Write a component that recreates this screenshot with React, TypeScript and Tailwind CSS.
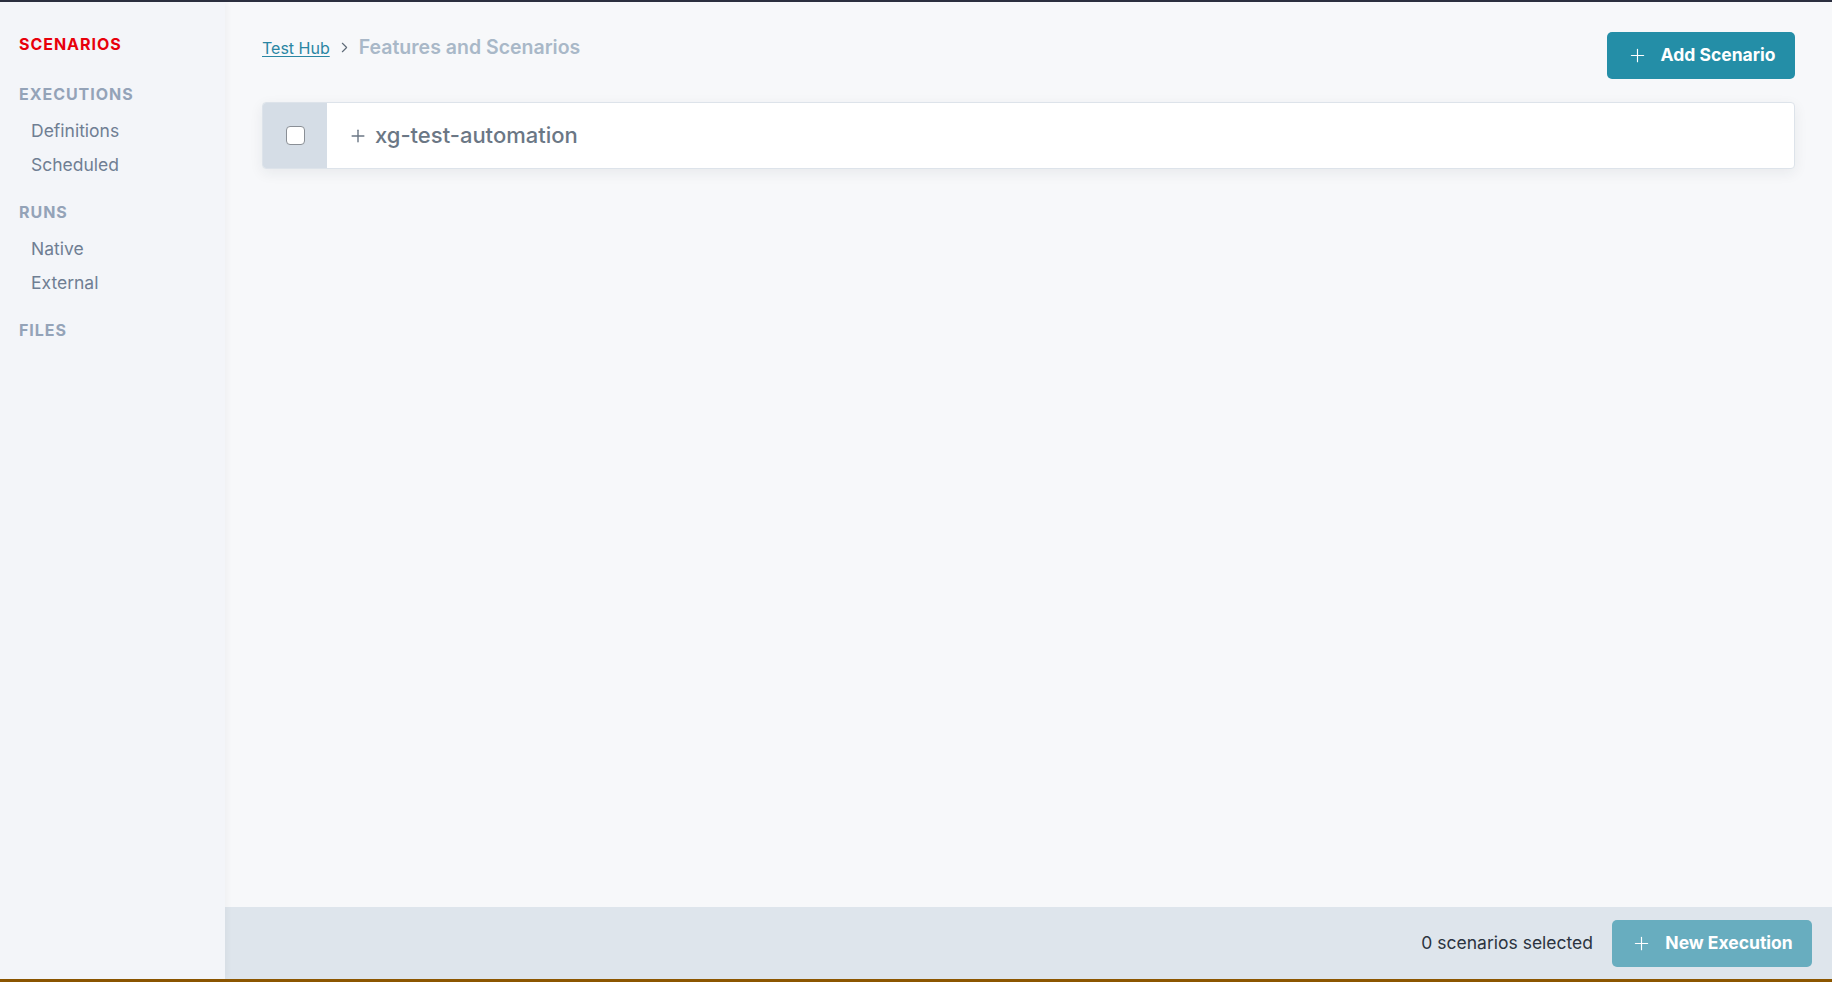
import { Plus, ChevronRight } from "lucide-react";

const FONT = { fontFamily: "Inter, 'Noto Sans', sans-serif" };

function SectionTitle({ label, active }: { label: string; active?: boolean }) {
  return (
    <div
      className={`text-[16px] font-bold uppercase tracking-[0.06em] leading-none ${
        active ? "text-[#e8000b]" : "text-[#94a3b8]"
      }`}
    >
      {label}
    </div>
  );
}

function NavItem({ label }: { label: string }) {
  return (
    <div className="pl-[12px] text-[17.5px] leading-none text-[#6f7e93]">{label}</div>
  );
}

export default function App() {
  return (
    <div
      className="flex h-[982px] w-[1832px] flex-col overflow-hidden bg-[#f7f8fa]"
      style={FONT}
    >
      <div className="h-[2px] bg-[#2b2f3f]" />
      <div className="flex min-h-0 flex-1">
        {/* Sidebar */}
        <aside className="relative z-10 w-[225px] shrink-0 bg-[#f3f5f9] px-[19px] pt-[34px] shadow-[2px_0_6px_rgba(0,0,0,0.04)]">
          <SectionTitle label="Scenarios" active />
          <div className="mt-[34px]">
            <SectionTitle label="Executions" />
          </div>
          <div className="mt-[20px] flex flex-col gap-[16px]">
            <NavItem label="Definitions" />
            <NavItem label="Scheduled" />
          </div>
          <div className="mt-[31px]">
            <SectionTitle label="Runs" />
          </div>
          <div className="mt-[20px] flex flex-col gap-[16px]">
            <NavItem label="Native" />
            <NavItem label="External" />
          </div>
          <div className="mt-[31px]">
            <SectionTitle label="Files" />
          </div>
        </aside>

        {/* Main */}
        <main className="flex min-w-0 flex-1 flex-col">
          <div className="flex-1 pl-[37px] pr-[37px] pt-[30px]">
            <div className="flex items-start justify-between">
              <div className="mt-[1px] flex items-center gap-[6px]">
                <a className="text-[16px] text-[#2a86a3] underline underline-offset-2">Test Hub</a>
                <ChevronRight className="h-[17px] w-[17px] text-[#5f6b78]" strokeWidth={1.6} />
                <span className="text-[19.5px] font-semibold text-[#a9b8c8]">
                  Features and Scenarios
                </span>
              </div>
              <button className="flex h-[47px] w-[188px] items-center justify-center gap-[13px] rounded-[5px] bg-[#248ea7] text-[17.5px] font-bold text-white">
                <Plus className="h-[21px] w-[21px]" strokeWidth={1.3} />
                Add Scenario
              </button>
            </div>

            <div className="mt-[23px] flex h-[67px] overflow-hidden rounded-[4px] border border-[#dde3ea] bg-white shadow-[0_4px_14px_rgba(30,40,60,0.07)]">
              <div className="flex w-[64px] shrink-0 items-center justify-center bg-[#d5dde6]">
                <div className="h-[19px] w-[19px] rounded-[4px] border border-[#8a8f96] bg-white" />
              </div>
              <div className="flex items-center gap-[7px] pl-[21px] text-[22px] font-medium text-[#6b7785]">
                <Plus className="h-[20px] w-[20px] text-[#6b7785]" strokeWidth={1.7} />
                xg-test-automation
              </div>
            </div>
          </div>

          {/* Bottom bar */}
          <div className="flex h-[72px] shrink-0 items-center justify-end gap-[19px] bg-[#dee5ec] pr-[20px]">
            <span className="text-[17.5px] text-[#2c3440]">0 scenarios selected</span>
            <button className="flex h-[47px] w-[200px] items-center justify-center gap-[13px] rounded-[5px] bg-[#68adbf] text-[17.5px] font-bold text-white">
              <Plus className="h-[21px] w-[21px]" strokeWidth={1.3} />
              New Execution
            </button>
          </div>
        </main>
      </div>
      <div className="h-[3px] bg-[#8c5600]" />
    </div>
  );
}
